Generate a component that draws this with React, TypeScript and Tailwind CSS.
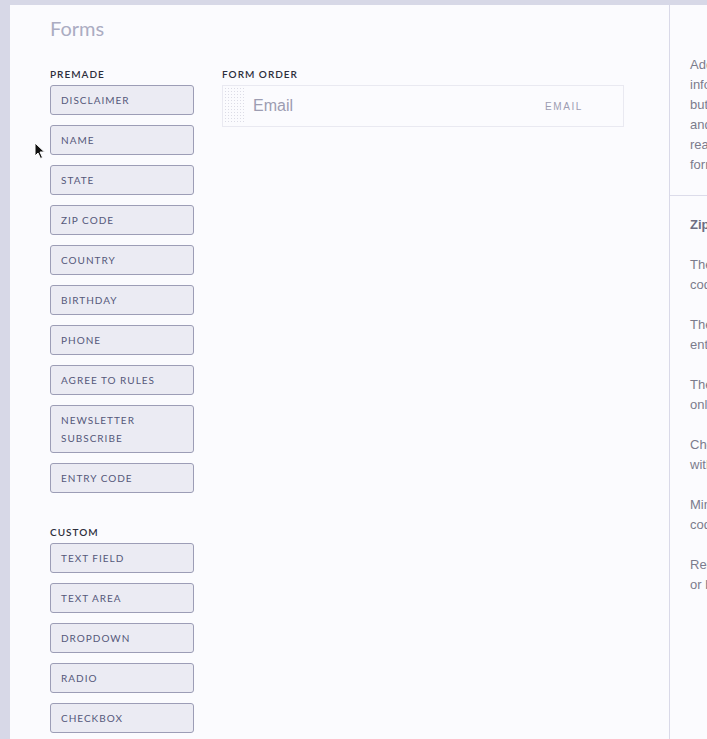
import React from "react";

const premade = [
  "Disclaimer",
  "Name",
  "State",
  "Zip Code",
  "Country",
  "Birthday",
  "Phone",
  "Agree to Rules",
  "Newsletter Subscribe",
  "Entry Code",
];

const custom = ["Text Field", "Text Area", "Dropdown", "Radio", "Checkbox"];

const intro = [
  "Add extra fields to gather more",
  "information from your entrants. Click a",
  "button to add a field to your form,",
  "and drag the fields up and down to",
  "rearrange the order they appear on the",
  "form.",
];

const zipNotes = [
  ["The Zip Code field lets entrants enter a postal", "code along with their entry."],
  ["The label is shown above the field on the", "entry form."],
  ["The placeholder text shows inside the field", "only while it is empty."],
  ["Check required to stop entrants submitting", "without filling in the field."],
  ["Minimum length sets how many digits a zip", "code needs to be accepted."],
  ["Remove the field at any time from this panel", "or by dragging it out of the list."],
];

function FieldButton({ label, tall }: { label: string; tall?: boolean }) {
  return (
    <button
      className={`w-[144px] text-left rounded-[3px] border border-[#9c9db6] bg-[#ebebf3] px-[10px] text-[10px] tracking-[0.1em] uppercase text-[#55587a] font-['Lato','Open_Sans',sans-serif] ${
        tall ? "h-[48px] leading-[18px] py-[5px]" : "h-[30px] leading-[27px]"
      }`}
    >
      {tall ? (
        <>
          <span className="block">Newsletter</span>
          <span className="block">Subscribe</span>
        </>
      ) : (
        label
      )}
    </button>
  );
}

function SectionLabel({ children }: { children: React.ReactNode }) {
  return (
    <div className="h-[12px] text-[10px] leading-[12px] tracking-[0.1em] uppercase text-[#2d2e3c] font-semibold font-['Lato',sans-serif]">
      {children}
    </div>
  );
}

function DragHandle() {
  return (
    <svg width="19" height="36" className="shrink-0">
      <defs>
        <pattern id="dots" width="3" height="3" patternUnits="userSpaceOnUse">
          <rect x="0" y="0" width="1" height="1" fill="#dcdce6" />
        </pattern>
      </defs>
      <rect width="19" height="36" fill="url(#dots)" />
    </svg>
  );
}

export default function App() {
  return (
    <div className="h-[739px] w-full overflow-hidden bg-[#d7d8e7] pl-[10px] pt-[5px]">
      <div className="flex h-full bg-[#fbfbfe] relative">
        {/* left: forms editor */}
        <div className="w-[660px] shrink-0 border-r border-[#d9d9e8] pl-[40px] pt-[11px]">
          <h1 className="text-[20px] leading-[24px] text-[#abacc2] font-['Lato',sans-serif]">Forms</h1>

          <div className="mt-[28px] flex gap-[28px]">
            <div className="flex flex-col">
              <SectionLabel>Premade</SectionLabel>
              <div className="mt-[5px] flex flex-col gap-[10px]">
                {premade.map((p) => (
                  <FieldButton key={p} label={p} tall={p === "Newsletter Subscribe"} />
                ))}
              </div>

              <div className="mt-[33px]">
                <SectionLabel>Custom</SectionLabel>
              </div>
              <div className="mt-[5px] flex flex-col gap-[10px]">
                {custom.map((c) => (
                  <FieldButton key={c} label={c} />
                ))}
              </div>
            </div>

            <div className="flex flex-col">
              <SectionLabel>Form Order</SectionLabel>
              <div className="mt-[5px] flex h-[42px] w-[402px] items-center border border-[#e9e9f1] bg-[#fbfbfe] pl-[2px] pr-[40px]">
                <DragHandle />
                <span className="ml-[9px] flex-1 text-[16px] text-[#9d9db2] font-['Liberation_Sans',Arial,sans-serif]">
                  Email
                </span>
                <span className="text-[10px] tracking-[0.16em] text-[#9d9db2] font-['Liberation_Sans',Arial,sans-serif]">
                  EMAIL
                </span>
              </div>
            </div>
          </div>
        </div>

        {/* right: help panel */}
        <div className="flex-1 overflow-hidden font-['Liberation_Sans',Arial,sans-serif] text-[13px] leading-[20px] text-[#7b7b8c]">
          <div className="pl-[20px] pt-[50px] pb-[20px] border-b border-[#dcdcea]">
            {intro.map((l) => (
              <div key={l} className="whitespace-nowrap">{l}</div>
            ))}
          </div>
          <div className="pl-[20px] pt-[19px]">
            <div className="whitespace-nowrap font-bold text-[#6c6d82]">Zip Code</div>
            {zipNotes.map((n) => (
              <div key={n[0]} className="mt-[20px]">
                <div className="whitespace-nowrap">{n[0]}</div>
                <div className="whitespace-nowrap">{n[1]}</div>
              </div>
            ))}
          </div>
        </div>

        {/* mouse cursor */}
        <svg className="absolute left-[24px] top-[137px]" width="12" height="18" viewBox="0 0 12 18">
          <path d="M1 1 L1 14 L4 11 L6.5 16.5 L8.5 15.5 L6 10 L10.5 10 Z" fill="#111" stroke="#fff" strokeWidth="1" />
        </svg>
      </div>
    </div>
  );
}
